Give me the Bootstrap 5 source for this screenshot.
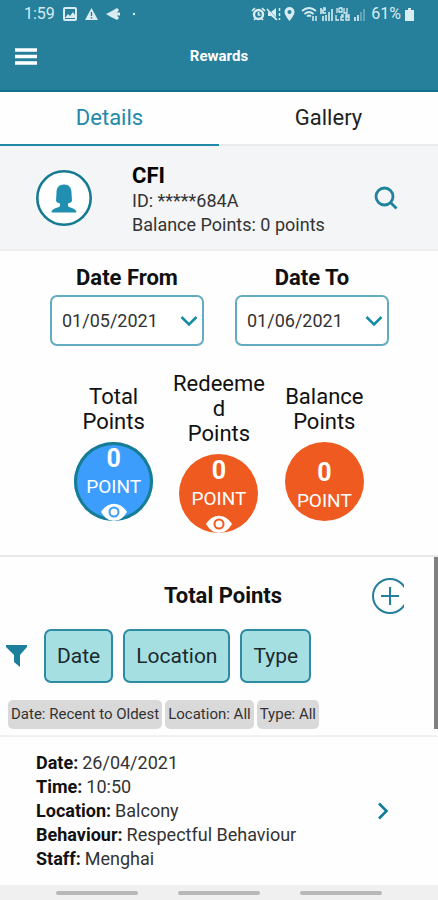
<!DOCTYPE html>
<html lang="en">
<head>
<meta charset="utf-8">
<meta name="viewport" content="width=device-width, initial-scale=1">
<title>Rewards</title>
<link href="https://cdn.jsdelivr.net/npm/bootstrap@5.3.0/dist/css/bootstrap.min.css" rel="stylesheet">
<style>
  :root { --teal: #26809b; --teal-line: #2489a8; }
  body { font-family: Roboto, "Liberation Sans", sans-serif; color: #111; font-size: 18px; line-height: 24px; background: #fefefe; }
  svg { display: block; flex: none; }
  .app-head { background: var(--teal); border-bottom: 2px solid #13708c; color: #fff; }
  .status-bar { height: 28px; padding: 0 24px; font-size: 16px; color: #d8ecf1; }
  .title-bar { display: grid; grid-template-columns: 40px 1fr 40px; height: 62px; padding: 0 15px 6px; }
  .title-bar h1 { font-size: 15px; }
  .tab-row .nav-link { color: #222; font-size: 22px; line-height: 26px; padding: 13px 0; border: 0; border-bottom: 2px solid #e9eaeb; border-radius: 0; }
  .tab-row .nav-link.active { color: var(--teal-line); border-bottom-color: var(--teal-line); }
  .profile { background: #f3f5f7; border-bottom: 2px solid #eceeef; padding: 13px 40px 12px 36px; }
  .avatar { width: 56px; margin-right: 40px; }
  .profile h2, .label-text, .section-title { font-size: 22px; font-weight: 700; line-height: 26px; }
  .profile-text { color: #333; padding-top: 4px; }
  .dates { padding: 14px 49px 0 50px; gap: 31px; }
  .date-select { height: 51px; border: 2px solid #62abc0; border-radius: 7px; font-size: 18px; color: #333; padding: 0 32px 0 10px; background: #fff; appearance: none; }
  .select-arrow { position: absolute; right: 6px; top: 20px; pointer-events: none; }
  .totals { padding: 25px 61px 22px; border-bottom: 2px solid #e9e9e9; }
  .total-col { width: 93px; font-size: 22px; line-height: 25px; overflow-wrap: anywhere; }
  .disc { width: 79px; height: 79px; margin-top: 8px; border-radius: 50%; background: #ee5a20; color: #fff; border: 0; padding: 4px 0 0; overflow: hidden; }
  .disc-blue { background: #3d9dfc; box-shadow: inset 0 0 0 3px #167d93; }
  .disc-plain { padding-top: 18px; }
  .disc-num { font-size: 25px; font-weight: 700; line-height: 26px; }
  .disc-unit { font-size: 19px; line-height: 30px; }
  .head-row { display: grid; grid-template-columns: 40px 1fr 40px; padding: 20px 26px 0 34px; }
  .section-title { grid-column: 2; }
  .filters { padding: 14px 6px 0; gap: 10px; }
  .filter-icon { margin-right: 7px; }
  .filter-btn { background: #a6dfe1; border: 2px solid #2d8ca3; border-radius: 7px; font-size: 21px; line-height: 26px; padding: 12px 11px; color: #1b2a2e; }
  .chips { padding: 17px 8px 6px; gap: 3px; }
  .chip { background: #d9d9d9; border-radius: 5px; font-size: 15px; line-height: 19px; padding: 5px 3px; color: #333; }
  .entry { border-top: 2px solid #f2f2f2; padding: 14px 49px 12px 36px; color: #333; }
  .entry dt { font-weight: 700; color: #111; }
  .entry-link { color: #0e7c9a; }
  .scroll-thumb { position: absolute; right: 0; top: 0; width: 4px; height: 172px; background: #808080; }
  .sys-nav { height: 15px; background: #f0f0f0; padding: 0 56px; gap: 40px; }
  .sys-nav span { height: 4px; background: #b8b8b8; border-radius: 2px; }
</style>
<script src="https://cdn.jsdelivr.net/npm/bootstrap@5.3.0/dist/js/bootstrap.bundle.min.js"></script>
</head>
<body>
<div class="d-flex flex-column min-vh-100">
  <header class="app-head">
    <div class="status-bar d-flex align-items-center justify-content-between">
      <div class="d-flex align-items-center gap-2">
        <span>1:59</span>
        <svg width="14" height="14" viewBox="0 0 14 14"><rect x="1" y="1" width="12" height="12" rx="1" fill="none" stroke="currentColor" stroke-width="2"/><path d="M2 11l3-4 2 2 3-4 2 3v3z" fill="currentColor"/></svg>
        <svg width="13" height="12" viewBox="0 0 13 12"><path d="M6.500 0L13 12H0z" fill="currentColor"/><path d="M6.500 4v4M6.500 9v1.500" stroke="#26809b" stroke-width="1.400"/></svg>
        <svg width="14" height="12" viewBox="0 0 14 12"><path d="M0 6l5-2.500L11 0l2 2-2 2.500h3v3h-3l2 2.500-2 2-6-3z" fill="currentColor"/></svg>
        <svg width="12" height="4" viewBox="0 0 12 4"><circle cx="6" cy="2" r="1.200" fill="currentColor"/></svg>
      </div>
      <div class="d-flex align-items-center gap-1">
        <svg width="46" height="14" viewBox="0 0 46 14" fill="none" stroke="currentColor">
          <circle cx="7.500" cy="7.500" r="4.500" stroke-width="2.400"/><path d="M1 4l3-3M11 1l3 3M3 13l2-2M12 13l-2-2M7.500 5v3h2" stroke-width="1.700"/>
          <path d="M17 5h3l5-4v12l-5-4h-3z" fill="currentColor" stroke="none"/><path d="M16 1l11 12" stroke="#26809b"/><path d="M16 2l10 11M28.500 1v3m0 2v3m0 2v2" stroke-width="1.500"/>
          <path d="M38.500 0a5 5 0 0 1 5 5c0 3-5 9-5 9s-5-6-5-9a5 5 0 0 1 5-5zm0 3a2 2 0 1 0 0 4 2 2 0 0 0 0-4z" fill="currentColor" stroke="none"/>
        </svg>
        <svg width="66" height="14" viewBox="0 0 66 14" fill="none" stroke="currentColor">
          <path d="M1 4q7-6 14 0M3.500 7q4.500-4 9 0M6 9.500q2-2 4 0" stroke-width="1.700"/><path d="M12 9v5M15 14V9" stroke-width="1.500"/>
          <path d="M20 1v6M22 1h2v2h-2v3h3M22 9v5M25 8v6M28 5v9M31 2v12" stroke-width="1.600"/>
          <path d="M36 1v5M38 1v4h3V1h-3M43 1v5h3V1M35 8v5h3M40 8h2v2h-2v3h3M45 8h3v5h-3zM45 10h3" stroke-width="1.300"/>
          <path d="M54 10v4M57 8v6" stroke-width="1.700"/><path d="M60 5v9M63 2v12" stroke-width="1.700" opacity=".4"/>
        </svg>
        <span>61%</span>
        <svg width="9" height="13" viewBox="0 0 9 13"><path d="M3 0h3v2h3v11H0V2h3z" fill="currentColor"/></svg>
      </div>
    </div>
    <div class="title-bar align-items-center">
      <button class="btn p-0 border-0" type="button" aria-label="Menu"><svg width="22" height="17" viewBox="0 0 22 17"><path d="M0 2h22M0 8.500h22M0 15h22" stroke="#fff" stroke-width="3.500"/></svg></button>
      <h1 class="fw-bold text-center m-0">Rewards</h1>
    </div>
  </header>

  <nav class="tab-row nav nav-fill">
    <a class="nav-link col-6 active" href="#details" aria-current="page">Details</a>
    <a class="nav-link col-6" href="#gallery">Gallery</a>
  </nav>

  <section class="profile d-flex align-items-center" id="details">
    <svg class="avatar" height="56" viewBox="0 0 56 56"><circle cx="28" cy="28" r="26.700" fill="#fff" stroke="#157a92" stroke-width="2.600"/><path d="M28 14.500c-5 0-7.500 3-7.500 8L20 31c1 1.500 2 2 4 2.500V36c-1 2-8.500 2-8.500 6.500h25c0-4.500-7.500-4.500-8.500-6.500v-2.500c2-.5 3-1 4-2.500l-.5-8.500c0-5-2.500-8-7.500-8z" fill="#218fb0"/></svg>
    <div class="profile-text flex-grow-1">
      <h2 class="m-0 text-black">CFI</h2>
      <div>ID: *****684A</div>
      <div>Balance Points: 0 points</div>
    </div>
    <button class="btn p-0 border-0" type="button" aria-label="Search"><svg width="24" height="24" viewBox="0 0 24 24" fill="none" stroke="#1f829f" stroke-width="2.800"><circle cx="10.500" cy="10.500" r="8.500"/><path d="M16.500 16.500l6 6"/></svg></button>
  </section>

  <form class="dates d-flex">
    <div class="flex-fill text-center">
      <label class="label-text d-block mb-1" for="from">Date From</label>
      <div class="position-relative">
        <select class="date-select w-100" id="from"><option>01/05/2021</option></select>
        <svg class="select-arrow" width="18" height="12" viewBox="0 0 18 12"><path d="M1.500 2L9 9.500 16.500 2" fill="none" stroke="#168ba5" stroke-width="2.500"/></svg>
      </div>
    </div>
    <div class="flex-fill text-center">
      <label class="label-text d-block mb-1" for="to">Date To</label>
      <div class="position-relative">
        <select class="date-select w-100" id="to"><option>01/06/2021</option></select>
        <svg class="select-arrow" width="18" height="12" viewBox="0 0 18 12"><path d="M1.500 2L9 9.500 16.500 2" fill="none" stroke="#168ba5" stroke-width="2.500"/></svg>
      </div>
    </div>
  </form>

  <section class="totals d-flex align-items-center justify-content-around text-center">
    <div class="total-col d-flex flex-column align-items-center">
      <div>Total<br>Points</div>
      <button type="button" class="disc disc-blue d-flex flex-column align-items-center">
        <span class="disc-num">0</span><span class="disc-unit">POINT</span>
        <svg width="26" height="20" viewBox="0 0 26 20"><path d="M0 10C7-1 19-1 26 10c-7 12-19 12-26 0z" fill="#fff"/><circle cx="13" cy="10" r="4.500" fill="none" stroke="#3d9dfc" stroke-width="2"/></svg>
      </button>
    </div>
    <div class="total-col d-flex flex-column align-items-center">
      <div>Redeemed<br>Points</div>
      <button type="button" class="disc d-flex flex-column align-items-center">
        <span class="disc-num">0</span><span class="disc-unit">POINT</span>
        <svg width="26" height="20" viewBox="0 0 26 20"><path d="M0 10C7-1 19-1 26 10c-7 12-19 12-26 0z" fill="#fff"/><circle cx="13" cy="10" r="4.500" fill="none" stroke="#ee5a20" stroke-width="2"/></svg>
      </button>
    </div>
    <div class="total-col d-flex flex-column align-items-center">
      <div>Balance<br>Points</div>
      <div class="disc disc-plain d-flex flex-column align-items-center">
        <span class="disc-num">0</span><span class="disc-unit">POINT</span>
      </div>
    </div>
  </section>

  <main class="position-relative">
    <div class="scroll-thumb"></div>
    <div class="head-row align-items-center">
      <h2 class="section-title text-center m-0">Total Points</h2>
      <button class="btn p-0 border-0" type="button" aria-label="Add"><svg width="32" height="38" viewBox="0 0 32 38" fill="none" stroke="#237f9b" stroke-width="2"><circle cx="18" cy="19" r="17"/><path d="M18 10v18M9 19h18"/></svg></button>
    </div>
    <div class="filters d-flex align-items-center">
      <svg class="filter-icon" width="21" height="22" viewBox="0 0 21 22"><path d="M0 0h21v2l-7 8v12l-6-5v-7L0 2z" fill="#1d7f9b"/></svg>
      <button class="filter-btn" type="button">Date</button>
      <button class="filter-btn" type="button">Location</button>
      <button class="filter-btn" type="button">Type</button>
    </div>
    <div class="chips d-flex">
      <span class="chip">Date: Recent to Oldest</span>
      <span class="chip">Location: All</span>
      <span class="chip">Type: All</span>
    </div>
    <article class="entry d-flex align-items-center justify-content-between">
      <dl class="m-0">
        <div class="d-flex gap-1"><dt>Date:</dt><dd class="m-0">26/04/2021</dd></div>
        <div class="d-flex gap-1"><dt>Time:</dt><dd class="m-0">10:50</dd></div>
        <div class="d-flex gap-1"><dt>Location:</dt><dd class="m-0">Balcony</dd></div>
        <div class="d-flex gap-1"><dt>Behaviour:</dt><dd class="m-0">Respectful Behaviour</dd></div>
        <div class="d-flex gap-1"><dt>Staff:</dt><dd class="m-0">Menghai</dd></div>
      </dl>
      <a class="entry-link" href="#entry" aria-label="Open entry"><svg width="12" height="18" viewBox="0 0 12 18"><path d="M2 1.500L9.500 9 2 16.500" fill="none" stroke="currentColor" stroke-width="2.600"/></svg></a>
    </article>
  </main>

  <footer class="sys-nav d-flex align-items-center mt-auto">
    <span class="flex-fill"></span><span class="flex-fill"></span><span class="flex-fill"></span>
  </footer>
</div>
</body>
</html>
